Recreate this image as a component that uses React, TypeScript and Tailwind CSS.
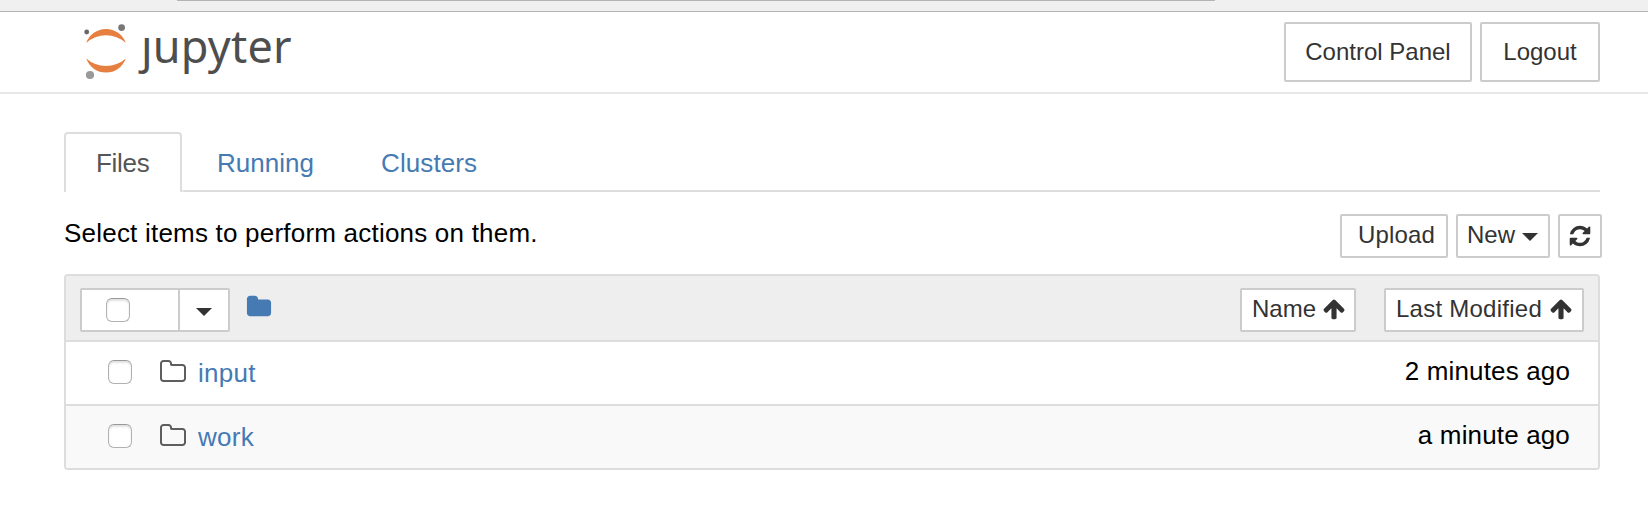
import type { ReactNode } from "react";

const paths = {
  folder:
    "M1728 608v704q0 92-66 158t-158 66h-1216q-92 0-158-66t-66-158v-960q0-92 66-158t158-66h320q92 0 158 66t66 158v32h672q92 0 158 66t66 158z",
  folderOpen:
    "M1600 1312v-704q0-40-28-68t-68-28h-704q-40 0-68-28t-28-68v-64q0-40-28-68t-68-28h-320q-40 0-68 28t-28 68v960q0 40 28 68t68 28h1216q40 0 68-28t28-68zm128-704v704q0 92-66 158t-158 66h-1216q-92 0-158-66t-66-158v-960q0-92 66-158t158-66h320q92 0 158 66t66 158v32h672q92 0 158 66t66 158z",
  refresh:
    "M1639 1056q0 5-1 7-64 268-268 434.5t-478 166.5q-146 0-282.5-55t-243.5-157l-129 129q-19 19-45 19t-45-19-19-45v-448q0-26 19-45t45-19h448q26 0 45 19t19 45-19 45l-137 137q71 66 161 102t187 36q134 0 250-65t186-179q11-17 53-117 8-23 30-23h192q13 0 22.5 9.5t9.5 22.5zm25-800v448q0 26-19 45t-45 19h-448q-26 0-45-19t-19-45 19-45l138-138q-148-137-349-137-134 0-250 65t-186 179q-11 17-53 117-8 23-30 23h-199q-13 0-22.5-9.5t-9.5-22.5v-7q65-268 270-434.5t480-166.5q146 0 284 55.5t245 156.5l130-129q19-19 45-19t45 19 19 45z",
  arrowUp:
    "M1675 971q0 51-37 90l-75 75q-38 38-91 38-54 0-90-38l-294-293v704q0 52-37.5 84.5t-90.5 32.5h-128q-53 0-90.5-32.5t-37.5-84.5v-704l-294 293q-36 38-90 38t-90-38l-75-75q-38-38-38-90 0-53 38-91l651-651q35-37 90-37 54 0 91 37l651 651q37 39 37 91z",
};

function Icon({ name, className }: { name: keyof typeof paths; className: string }) {
  return (
    <svg viewBox="0 0 1792 1792" fill="currentColor" className={`shrink-0 ${className}`}>
      <path d={paths[name]} />
    </svg>
  );
}

function Caret() {
  return (
    <svg viewBox="0 0 16 8" fill="currentColor" className="h-2 w-4 shrink-0">
      <path d="M0 0H16L8 8Z" />
    </svg>
  );
}

function Button({ className, children }: { className: string; children: ReactNode }) {
  return (
    <button
      className={`flex items-center whitespace-nowrap rounded-[2px] border-2 border-[#cccccc] bg-white text-2xl leading-none text-[#333333] ${className}`}
    >
      {children}
    </button>
  );
}

function Checkbox() {
  return (
    <span className="block size-6 shrink-0 rounded-[6px] border border-[#b2b2b2] border-t-[#999999] bg-white shadow-[inset_0_2px_2px_#e2e2e2]" />
  );
}

function Logo() {
  return (
    <div className="flex h-[60px]">
      <svg viewBox="0 0 44 60" className="h-[60px] w-11">
        <path d="M2.200 21A21 21 0 0 1 41.800 21A29.300 29.300 0 0 0 2.200 21Z" fill="#e67f3f" />
        <path d="M2.200 36.500A21 21 0 0 0 41.800 36.500A29.900 29.900 0 0 1 2.200 36.500Z" fill="#e67f3f" />
        <circle cx="2.700" cy="10" r="2.400" fill="#666666" />
        <circle cx="37.600" cy="5.600" r="3.400" fill="#777777" />
        <circle cx="6" cy="53" r="4.100" fill="#999999" />
      </svg>
      <span className="ml-[13px] mt-[4px] font-['Noto_Sans','Open_Sans',sans-serif] text-[45px] leading-[40px] tracking-[0.2px] text-[#4e4e4e]">
        ȷupyter
      </span>
    </div>
  );
}

const rows = [
  { name: "input", modified: "2 minutes ago", style: "bg-white" },
  { name: "work", modified: "a minute ago", style: "border-t-2 border-[#dddddd] bg-[#f9f9f9]" },
];

export default function App() {
  return (
    <div className="h-[526px] w-[1648px] overflow-hidden bg-white font-['Liberation_Sans',Arial,sans-serif] text-[26px] leading-none text-black">
      <div className="h-3 border-b border-[#b4b4b4] bg-[#f0f0f0]">
        <div className="ml-[177px] h-px w-[1038px] bg-[#b4b4b4]" />
      </div>

      <header className="flex h-[82px] items-start justify-between border-b-2 border-[#e7e7e7] pl-[84px] pr-12 pt-[10px]">
        <Logo />
        <div className="flex gap-2">
          <Button className="h-[60px] w-[188px] justify-center">Control Panel</Button>
          <Button className="h-[60px] w-[120px] justify-center">Logout</Button>
        </div>
      </header>

      <main className="pl-16 pr-[46px] pt-[38px]">
        <nav className="mr-[2px] flex h-[60px]">
          <div className="flex w-[118px] items-center rounded-t-[4px] border-2 border-b-0 border-[#dddddd] pl-[30px] tracking-[-0.3px] text-[#555555]">
            Files
          </div>
          <div className="flex flex-1 items-center rounded-bl-[2px] border-b-2 border-[#dddddd] pt-1 text-[#467ab3]">
            <a className="ml-[35px] w-[164px]">Running</a>
            <a className="tracking-[0.1px]">Clusters</a>
          </div>
        </nav>

        <div className="flex h-[82px] items-start justify-between pt-[22px]">
          <p className="mt-[6px] tracking-[0.21px]">Select items to perform actions on them.</p>
          <div className="flex gap-2">
            <Button className="h-11 w-[108px] pb-[2px] pl-4 tracking-[0.15px]">Upload</Button>
            <Button className="h-11 w-[94px] justify-between pb-[2px] pl-[9px] pr-[10px]">
              New
              <span className="pt-1">
                <Caret />
              </span>
            </Button>
            <Button className="h-11 w-11 justify-center pr-px">
              <Icon name="refresh" className="size-6" />
            </Button>
          </div>
        </div>

        <section className="mr-[2px] overflow-hidden rounded-[4px] border-2 border-[#dddddd]">
          <div className="flex h-[66px] items-start border-b-2 border-[#dddddd] bg-[#eeeeee] pl-[14px] pr-[14px] pt-3">
            <div className="flex h-11 w-[150px] rounded-[2px] border-2 border-[#cccccc] bg-white text-[#333333]">
              <div className="w-[98px] border-r-2 border-[#cccccc] pl-6 pt-2">
                <Checkbox />
              </div>
              <div className="flex flex-1 items-center justify-center pt-[3px]">
                <Caret />
              </div>
            </div>
            <Icon name="folder" className="ml-4 mt-[6px] size-[26px] text-[#467ab3]" />
            <div className="ml-auto flex gap-7">
              <Button className="h-11 w-[116px] justify-between pb-[2px] pl-[10px] pr-2">
                Name
                <Icon name="arrowUp" className="size-6" />
              </Button>
              <Button className="h-11 w-[200px] justify-between pb-[2px] pl-[10px] pr-[9px] tracking-[0.25px]">
                Last Modified
                <Icon name="arrowUp" className="size-6" />
              </Button>
            </div>
          </div>
          {rows.map((row) => (
            <div key={row.name} className={`flex items-start pl-[42px] pr-7 ${row.style}`}>
              <div className="flex h-[62px] flex-1 items-start">
                <div className="mt-[18px]">
                  <Checkbox />
                </div>
                <Icon name="folderOpen" className="ml-[27px] mt-4 size-7 text-[#5e5e5e]" />
                <a className="ml-[11px] mt-[18px] tracking-[0.3px] text-[#467ab3]">{row.name}</a>
              </div>
              <span className="mt-4 tracking-[0.15px]">{row.modified}</span>
            </div>
          ))}
        </section>
      </main>
    </div>
  );
}
